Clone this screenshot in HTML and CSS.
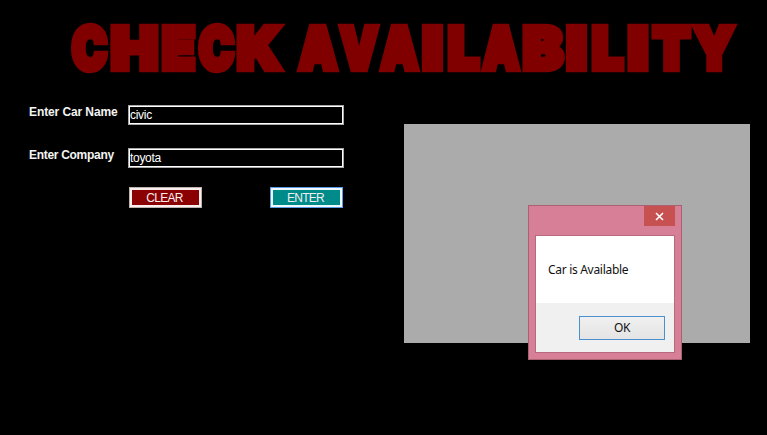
FILE: index.html
```
<!DOCTYPE html>
<html lang="en">
<head>
<meta charset="utf-8">
<title>Check Availability</title>
<link rel="stylesheet" href="styles.css">
</head>
<body>
<main class="window">
  <h1 class="title">
    <svg width="767" height="90" viewBox="0 0 767 90">
      <text y="69"><tspan x="72" textLength="35" lengthAdjust="spacingAndGlyphs">C</tspan><tspan x="111" textLength="47" lengthAdjust="spacingAndGlyphs">H</tspan><tspan x="162" textLength="33" lengthAdjust="spacingAndGlyphs">E</tspan><tspan x="199" textLength="35" lengthAdjust="spacingAndGlyphs">C</tspan><tspan x="237" textLength="44" lengthAdjust="spacingAndGlyphs">K</tspan></text>
      <text y="69"><tspan x="299" textLength="38" lengthAdjust="spacingAndGlyphs">A</tspan><tspan x="340" textLength="38" lengthAdjust="spacingAndGlyphs">V</tspan><tspan x="381" textLength="37" lengthAdjust="spacingAndGlyphs">A</tspan><tspan x="422.5" textLength="20" lengthAdjust="spacingAndGlyphs">I</tspan><tspan x="448" textLength="31" lengthAdjust="spacingAndGlyphs">L</tspan><tspan x="483" textLength="36" lengthAdjust="spacingAndGlyphs">A</tspan><tspan x="523" textLength="40" lengthAdjust="spacingAndGlyphs">B</tspan><tspan x="566.5" textLength="20" lengthAdjust="spacingAndGlyphs">I</tspan><tspan x="592" textLength="31" lengthAdjust="spacingAndGlyphs">L</tspan><tspan x="628" textLength="20" lengthAdjust="spacingAndGlyphs">I</tspan><tspan x="653" textLength="37" lengthAdjust="spacingAndGlyphs">T</tspan><tspan x="694" textLength="40" lengthAdjust="spacingAndGlyphs">Y</tspan></text>
    </svg>
  </h1>
  <div class="content">
    <form class="form">
      <label class="label" for="car">Enter Car Name</label>
      <input class="field" id="car" type="text" value="civic">
      <label class="label company" for="company">Enter Company</label>
      <input class="field" id="company" type="text" value="toyota">
      <div class="actions">
        <button class="button clear" type="button">CLEAR</button>
        <button class="button enter" type="button">ENTER</button>
      </div>
    </form>
    <section class="results">
      <div class="dialog" role="dialog">
        <div class="titlebar">
          <button class="close" type="button" aria-label="Close">
            <svg width="9" height="9" viewBox="0 0 9 9"><path d="M1 1L8 8M8 1L1 8"/></svg>
          </button>
        </div>
        <div class="dialog-body">
          <p class="message">Car is Available</p>
          <div class="footer"><button class="ok" type="button">OK</button></div>
        </div>
      </div>
    </section>
  </div>
</main>
</body>
</html>
```
FILE: styles.css
```
* { box-sizing: border-box; }
body { margin: 0; background: #000; overflow: hidden; }
.window { width: 767px; height: 435px; background: #000; font-family: "Liberation Sans", Arial, sans-serif; }
.title { margin: 0; height: 90px; }
.title svg { display: block; }
.title text {
  font-family: Inter, sans-serif;
  font-size: 57.5px;
  font-weight: 900;
  fill: #800000;
  stroke: #800000;
  stroke-width: 6.5px;
}
.content { display: flex; padding-left: 29px; }
.form {
  display: grid;
  grid-template-columns: 99px 216px;
  grid-template-rows: 20px 20px 21px;
  row-gap: 23px;
  width: 375px;
  padding-top: 15px;
  align-content: start;
}
.label { color: #f4f4f4; font-size: 12px; font-weight: bold; line-height: 14px; white-space: nowrap; letter-spacing: -0.1px; }
.company { letter-spacing: -0.3px; }
.field {
  width: 216px; height: 20px; margin: 0; padding: 0 0 0 1px;
  border: 1px solid #a8a8a8; outline: 1px solid #fff; outline-offset: -2px;
  background: #000; color: #fff; font: 12px "Liberation Sans", Arial, sans-serif;
  letter-spacing: -0.3px;
  border-radius: 0;
}
.actions { grid-column: 2; display: flex; justify-content: space-between; padding: 0 1px; margin-top: -4px; }
.button {
  width: 73px; height: 21px; padding: 1px 2px 0 0;
  border: 1px solid #bcb4ac; font: 12px/15px "Liberation Sans", Arial, sans-serif; color: #f4eeee;
  letter-spacing: -0.7px;
}
.clear { background: #8b0000; box-shadow: inset 0 0 0 2px #fbeeee; }
.enter { background: #008b8b; border-color: #5a9be8; box-shadow: inset 0 0 0 2px #eefaff; }
.results { width: 346px; height: 219px; margin-top: 34px; background: #ababab; padding: 81px 0 0 124px; }
.dialog {
  width: 154px; height: 155px; padding: 0 6px 6px;
  border: 1px solid #a9606f; background: #d67f96;
  font-family: "Noto Sans", "Open Sans", sans-serif;
}
.titlebar { height: 29px; display: flex; justify-content: flex-end; }
.close { width: 31px; height: 20px; padding: 0; border: 0; background: #c75050; display: grid; place-items: center; }
.close path { stroke: #fff; stroke-width: 1.6; }
.dialog-body { height: 118px; border: 1px solid #b9697d; background: #fff; }
.message { margin: 0; height: 67px; padding: 24px 0 0 12px; font-size: 12px; line-height: 20px; color: #111; letter-spacing: -0.3px; white-space: nowrap; }
.footer { height: 49px; background: #f0f0f0; padding: 13px 9px 0; display: flex; justify-content: flex-end; }
.ok {
  width: 86px; height: 24px; padding: 0 0 1px; border: 1px solid #4a90cf;
  background: linear-gradient(#f0f0f0, #e4e4e4); color: #111;
  font: 12px "Noto Sans", "Open Sans", sans-serif; letter-spacing: -0.4px;
}
```
